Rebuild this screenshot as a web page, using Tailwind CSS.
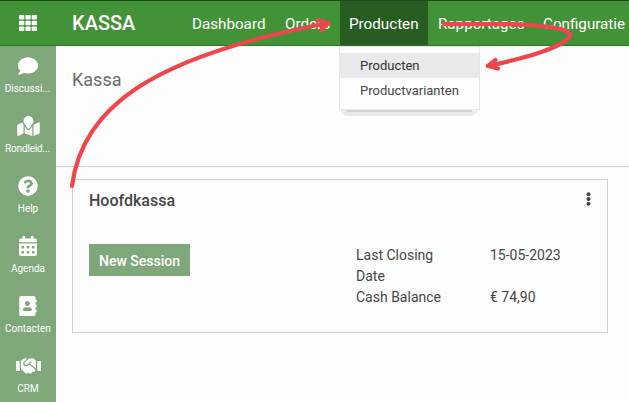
<!DOCTYPE html>
<html lang="nl">
<head>
<meta charset="utf-8">
<title>Kassa</title>
<script src="https://cdn.jsdelivr.net/npm/@tailwindcss/browser@4"></script>
</head>
<body class="relative flex h-[402px] w-[629px] flex-col overflow-hidden bg-[#fdfdfd] font-['Roboto',sans-serif] text-[#454545]">
<header class="flex h-[46px] shrink-0 items-stretch border-t border-b border-t-[#1d4a19] border-b-[#2f7329] bg-[#429238] text-white">
  <div class="flex w-[72px] items-center pl-[19px]">
    <svg class="h-4 w-[18px]" viewBox="0 0 18 16" fill="currentColor"><g id="r"><rect width="5.3" height="4.6" rx=".8"/><rect x="6.4" width="5.3" height="4.6" rx=".8"/><rect x="12.7" width="5.3" height="4.6" rx=".8"/></g><use href="#r" y="5.7"/><use href="#r" y="11.4"/></svg>
  </div>
  <div class="flex w-[110px] items-center text-[20px] font-medium">KASSA</div>
  <nav class="flex items-stretch whitespace-nowrap text-[15.2px]">
    <a class="flex w-[93px] items-center pt-[2px] pl-[10px]">Dashboard</a>
    <a class="flex w-[65px] items-center pt-[2px] pl-[10px]">Orders</a>
    <a class="flex w-[88px] items-center bg-[#275d23] pt-[2px] pl-[9px]">Producten</a>
    <a class="flex w-[106px] items-center pt-[2px] pl-[10px]">Rapportages</a>
    <a class="flex items-center pt-[2px] pl-[9px]">Configuratie</a>
  </nav>
</header>
<div class="flex min-h-0 flex-1">
  <aside class="flex w-14 shrink-0 flex-col bg-[#7ea87a] text-[10px] leading-3 text-white">
    <div class="flex h-[60px] shrink-0 flex-col items-center gap-[7px] pt-[10px]">
      <svg class="h-5 w-5" viewBox="0 0 512 512" fill="currentColor"><path d="M256 32C114.6 32 0 125.1 0 240c0 49.6 21.4 95 57 130.7C44.5 421.1 2.7 466 2.2 466.5c-2.2 2.3-2.8 5.7-1.5 8.7S4.8 480 8 480c66.3 0 116-31.8 140.6-51.4 32.7 12.3 69 19.4 107.4 19.4 141.4 0 256-93.1 256-208S397.4 32 256 32z"/></svg>
      <span class="pr-px">Discussi...</span>
    </div>
    <div class="flex h-[60px] shrink-0 flex-col items-center gap-[7px] pt-[10px]">
      <svg class="h-5 w-[23px]" viewBox="0 0 576 512" fill="currentColor"><path d="M288 0c-69.59 0-126 56.41-126 126 0 56.26 82.35 158.8 113.9 196.02 6.39 7.54 17.82 7.54 24.2 0C331.65 284.8 414 182.26 414 126 414 56.41 357.59 0 288 0zM20.12 215.95A32 32 0 0 0 0 245.66v250.32c0 11.32 11.43 19.06 21.94 14.86L160 448V214.92c-8.84-15.98-16.07-31.54-21.25-46.42L20.12 215.95zM288 359.67c-14.07 0-27.38-6.18-36.51-16.96-19.66-23.2-40.57-49.62-59.49-76.72v182l192 64V266c-18.92 27.09-39.82 53.52-59.49 76.72-9.13 10.77-22.44 16.95-36.51 16.95zm266.06-198.51L416 224v288l139.88-55.95A32 32 0 0 0 576 426.34V176.02c0-11.32-11.43-19.06-21.94-14.86z"/></svg>
      <span class="pr-px tracking-[-0.15px]">Rondleid...</span>
    </div>
    <div class="flex h-[60px] shrink-0 flex-col items-center gap-[7px] pt-[10px]">
      <svg class="h-5 w-5" viewBox="0 0 512 512" fill="currentColor"><path d="M504 256c0 136.997-111.043 248-248 248S8 392.997 8 256C8 119.083 119.043 8 256 8s248 111.083 248 248zM262.655 90c-54.497 0-89.255 22.957-116.549 63.758-3.536 5.286-2.353 12.415 2.715 16.258l34.699 26.31c5.205 3.947 12.621 3.008 16.665-2.122 17.864-22.658 30.113-35.797 57.303-35.797 20.429 0 45.698 13.148 45.698 32.958 0 14.976-12.363 22.667-32.534 33.976C247.128 238.528 216 254.941 216 296v4c0 6.627 5.373 12 12 12h56c6.627 0 12-5.373 12-12v-1.333c0-28.462 83.186-29.647 83.186-106.667 0-58.002-60.165-102-116.531-102zM256 338c-25.365 0-46 20.635-46 46 0 25.364 20.635 46 46 46s46-20.636 46-46c0-25.365-20.635-46-46-46z"/></svg>
      <span>Help</span>
    </div>
    <div class="flex h-[60px] shrink-0 flex-col items-center gap-[7px] pt-[10px]">
      <svg class="h-5 w-[18px]" viewBox="0 0 18 20" fill="currentColor"><path fill-rule="evenodd" d="M0 7.5H18V18.2Q18 20 16.2 20H1.8Q0 20 0 18.2ZM2.6 10V12.4H5V10ZM7.8 10V12.4H10.2V10ZM13 10V12.4H15.4V10ZM2.6 15V17.4H5V15ZM7.8 15V17.4H10.2V15ZM13 15V17.4H15.4V15Z"/><path d="M0 6.3V4.3Q0 2.5 1.8 2.5H3.6V.5Q3.6 0 4.1 0H5.6Q6.1 0 6.1 .5V2.5H11.9V.5Q11.9 0 12.4 0H13.9Q14.4 0 14.4 .5V2.5H16.2Q18 2.5 18 4.3V6.3Z"/></svg>
      <span>Agenda</span>
    </div>
    <div class="flex h-[60px] shrink-0 flex-col items-center gap-[7px] pt-[10px]">
      <svg class="h-5 w-[18px]" viewBox="0 0 448 512" fill="currentColor"><path d="M436 160c6.6 0 12-5.4 12-12v-40c0-6.6-5.4-12-12-12h-20V48c0-26.5-21.500-48-48-48H48C21.500 0 0 21.500 0 48v416c0 26.500 21.500 48 48 48h320c26.500 0 48-21.500 48-48v-48h20c6.600 0 12-5.400 12-12v-40c0-6.600-5.400-12-12-12h-20v-64h20c6.600 0 12-5.400 12-12v-40c0-6.600-5.400-12-12-12h-20v-64h20zm-228-32c35.300 0 64 28.700 64 64s-28.700 64-64 64-64-28.700-64-64 28.700-64 64-64zm112 236.800c0 10.600-10 19.200-22.400 19.200H118.400C106 384 96 375.400 96 364.800v-19.200c0-31.800 30.100-57.600 67.200-57.600h5c12.300 5.100 25.700 8 39.800 8s27.600-2.900 39.800-8h5c37.100 0 67.200 25.800 67.200 57.600v19.200z"/></svg>
      <span>Contacten</span>
    </div>
    <div class="flex h-[60px] shrink-0 flex-col items-center gap-[7px] pt-[10px]">
      <svg class="h-5 w-[25px]" viewBox="0 0 640 512" fill="currentColor"><path d="M434.700 64h-85.900c-8 0-15.700 3-21.600 8.400l-98.300 90c-.1.1-.2.3-.3.4-16.600 15.600-16.300 40.500-2.100 56 12.700 13.900 39.400 17.600 56.100 2.700.1-.1.3-.1.4-.2l79.900-73.200c6.500-5.900 16.700-5.500 22.600 1 6 6.500 5.500 16.600-1 22.600l-26.100 23.900L504 313.800c2.900 2.400 5.500 5 7.900 7.700V128l-54.600-54.600c-5.900-6-14.100-9.400-22.600-9.400zM544 128.200v223.900c0 17.700 14.300 32 32 32h64V128.200h-96zM0 384h64c17.700 0 32-14.300 32-32V128.200H0V384zm483.900-45.300L334.600 217.500l-30 27.500c-29.700 27.100-75.200 24.500-101.700-4.400-26.900-29.400-24.800-74.900 4.400-101.700L289.100 64h-83.800c-8.500 0-16.600 3.400-22.600 9.400L128 128v223.900h18.300l90.500 81.900c27.400 22.300 67.700 18.100 90-9.300l.2-.2 17.900 15.500c15.900 13 39.400 10.500 52.300-5.400l31.400-38.600 5.400 4.400c13.700 11.100 33.900 9.100 45-4.700l9.500-11.700c11.200-13.800 9.100-33.900-4.600-45.100z"/></svg>
      <span>CRM</span>
    </div>
  </aside>
  <main class="flex min-w-0 flex-1 flex-col">
    <div class="h-[121px] shrink-0 border-b border-[#cfcfcf] pt-[22px] pl-4 text-[18px] leading-6 text-[#6b6b6b]">Kassa</div>
    <section class="mt-3 ml-4 flex h-[154px] w-[536px] flex-col border border-[#cfcfcf] pl-4">
      <div class="flex h-[64px] justify-between pt-[10px] pr-[15px]">
        <h2 class="text-[16px] leading-[22px] font-medium">Hoofdkassa</h2>
        <svg class="mt-[2px] h-[14px] w-[7px]" viewBox="0 0 7 14" fill="currentColor"><circle cx="3.500" cy="2.200" r="2"/><circle cx="3.500" cy="7" r="2"/><circle cx="3.500" cy="11.800" r="2"/></svg>
      </div>
      <div class="flex items-start text-[14px] leading-[21px]">
        <button class="h-8 w-[101px] bg-[#7ea87a] pt-[2px] text-[14px] font-medium text-white">New Session</button>
        <div class="ml-[166px] grid grid-cols-[134px_100px] pt-px">
          <span class="w-[100px]">Last Closing Date</span><span>15-05-2023</span>
          <span>Cash Balance</span><span>€ 74,90</span>
        </div>
      </div>
    </section>
  </main>
</div>
<div class="absolute top-[108px] left-[340px] h-2 w-[138px] rounded-b-[10px] bg-[#e8eaea]"></div>
<div class="absolute top-[110px] left-[347px] h-[2px] w-[125px] bg-[#d0d4d3]"></div>
<div class="absolute top-[46px] left-[339px] h-[64px] w-[141px] border border-[#e4e6e7] bg-[#fdfdfd] pt-[6px] text-[13px] leading-[25px]">
  <div class="bg-[#e8e9eb] pl-5 text-[#303030]">Producten</div>
  <div class="pl-5">Productvarianten</div>
</div>
<svg class="absolute inset-0 h-[402px] w-[629px]" viewBox="0 0 629 402" fill="none" stroke="#ed474d" stroke-width="4.200" stroke-linecap="round" stroke-linejoin="round">
  <path d="M72 186C82 108 150 57 328 23"/><path d="M317.500 20L328.500 23L321 30.500"/>
  <path d="M444 24H494C535 24 574 28 570 36C565 46 530 57 488 66"/><path d="M495.500 60L488 66L498 68.500"/>
</svg>
</body>
</html>
